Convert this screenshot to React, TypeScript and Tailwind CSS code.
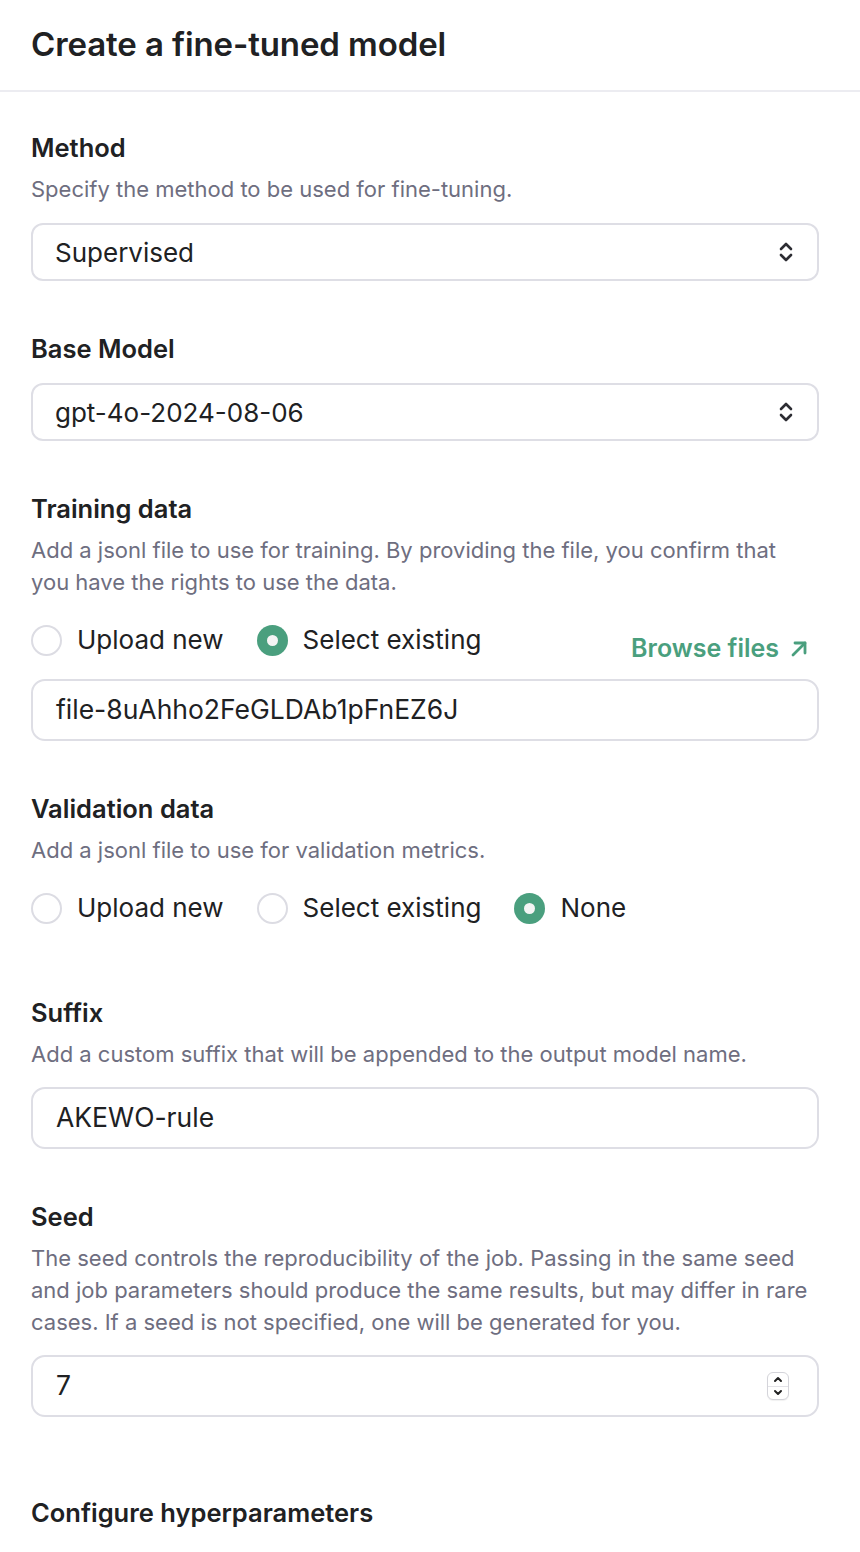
import React from "react";

const GREEN = "#4a9f7e";

function Radio({ checked }: { checked?: boolean }) {
  return checked ? (
    <span className="flex h-[31px] w-[31px] shrink-0 items-center justify-center rounded-full bg-[#4a9f7e]">
      <span className="h-[11px] w-[11px] rounded-full bg-[#f4f4f4]" />
    </span>
  ) : (
    <span className="h-[31px] w-[31px] shrink-0 rounded-full border-2 border-[#dcdce3] bg-white" />
  );
}

function RadioItem({ label, checked }: { label: string; checked?: boolean }) {
  return (
    <div className="flex items-center gap-[15px]">
      <Radio checked={checked} />
      <span className="text-[26px] leading-[32px] text-[#202123]">{label}</span>
    </div>
  );
}

function Chevrons() {
  return (
    <svg width="18" height="24" viewBox="0 0 18 24" fill="none" stroke="#2d2d33" strokeWidth="2.6" strokeLinecap="round" strokeLinejoin="round">
      <path d="M4 9 L9 4 L14 9" />
      <path d="M4 15 L9 20 L14 15" />
    </svg>
  );
}

function Label({ children }: { children: React.ReactNode }) {
  return <div className="text-[25.5px] font-semibold leading-[32px] text-[#202123]">{children}</div>;
}

function Desc({ children }: { children: React.ReactNode }) {
  return <div className="mt-[9px] text-[22px] leading-[32px] text-[#6e6e80]">{children}</div>;
}

function SelectBox({ value }: { value: string }) {
  return (
    <div className="mt-[18px] flex h-[58px] items-center justify-between rounded-[12px] border-2 border-[#dedee5] pl-[22px] pr-[22px]">
      <span className="text-[26px] text-[#202123]">{value}</span>
      <Chevrons />
    </div>
  );
}

function TextBox({ value, className = "", children }: { value: string; className?: string; children?: React.ReactNode }) {
  return (
    <div className={`flex h-[62px] items-center justify-between rounded-[14px] border-2 border-[#dedee5] pl-[23px] pr-[28px] ${className}`}>
      <span className="text-[26.5px] text-[#202123]">{value}</span>
      {children}
    </div>
  );
}

export default function App() {
  return (
    <div className="min-h-[1552px] w-[860px] bg-white" style={{ fontFamily: "Inter, 'Noto Sans', sans-serif" }}>
      <div className="flex h-[92px] items-center border-b-2 border-[#ececf1] pl-[31px]">
        <h1 className="text-[33px] font-semibold tracking-[-0.1px] text-[#202123]">Create a fine-tuned model</h1>
      </div>
      <div className="pl-[31px] pr-[41px] pt-[40px]">
        {/* Method */}
        <Label>Method</Label>
        <Desc>Specify the method to be used for fine-tuning.</Desc>
        <SelectBox value="Supervised" />

        {/* Base model */}
        <div className="mt-[52px]">
          <Label>Base Model</Label>
          <SelectBox value="gpt-4o-2024-08-06" />
        </div>

        {/* Training data */}
        <div className="mt-[52px]">
          <Label>Training data</Label>
          <Desc>
            Add a jsonl file to use for training. By providing the file, you confirm that you have the rights to use the data.
          </Desc>
          <div className="mt-[26px] flex items-start justify-between">
            <div className="flex items-center gap-[33px]">
              <RadioItem label="Upload new" />
              <RadioItem label="Select existing" checked />
            </div>
            <div className="mt-[9px] flex h-[32px] items-center gap-[10px] pr-[10px] text-[25px] font-semibold text-[#4a9f7e]">
              <span>Browse files</span>
              <svg width="20" height="20" viewBox="0 0 20 20" fill="none" stroke={GREEN} strokeWidth="2.8" strokeLinecap="round" strokeLinejoin="round">
                <path d="M4 16 L16 4" />
                <path d="M6 4 H16 V14" />
              </svg>
            </div>
          </div>
          <TextBox value="file-8uAhho2FeGLDAb1pFnEZ6J" className="mt-[14px]" />
        </div>

        {/* Validation data */}
        <div className="mt-[52px]">
          <Label>Validation data</Label>
          <Desc>Add a jsonl file to use for validation metrics.</Desc>
          <div className="mt-[26px] flex items-center gap-[33px]">
            <RadioItem label="Upload new" />
            <RadioItem label="Select existing" />
            <RadioItem label="None" checked />
          </div>
        </div>

        {/* Suffix */}
        <div className="mt-[73px]">
          <Label>Suffix</Label>
          <Desc>Add a custom suffix that will be appended to the output model name.</Desc>
          <TextBox value="AKEWO-rule" className="mt-[17px]" />
        </div>

        {/* Seed */}
        <div className="mt-[52px]">
          <Label>Seed</Label>
          <Desc>
            The seed controls the reproducibility of the job. Passing in the same seed and job parameters should produce the same results, but may differ in rare cases. If a seed is not specified, one will be generated for you.
          </Desc>
          <TextBox value="7" className="mt-[17px]">
            <div className="flex h-[28px] w-[22px] flex-col overflow-hidden rounded-[6px] border border-[#d4d4da] bg-white shadow-[0_1px_1px_rgba(0,0,0,0.06)]">
              <div className="flex flex-1 items-center justify-center border-b border-[#e3e3e8]">
                <svg width="10" height="7" viewBox="0 0 10 7" fill="none" stroke="#222" strokeWidth="2" strokeLinecap="round" strokeLinejoin="round">
                  <path d="M2 5 L5 2 L8 5" />
                </svg>
              </div>
              <div className="flex flex-1 items-center justify-center">
                <svg width="10" height="7" viewBox="0 0 10 7" fill="none" stroke="#222" strokeWidth="2" strokeLinecap="round" strokeLinejoin="round">
                  <path d="M2 2 L5 5 L8 2" />
                </svg>
              </div>
            </div>
          </TextBox>
        </div>

        {/* Configure hyperparameters */}
        <div className="mt-[80px]">
          <Label>Configure hyperparameters</Label>
        </div>
      </div>
    </div>
  );
}
